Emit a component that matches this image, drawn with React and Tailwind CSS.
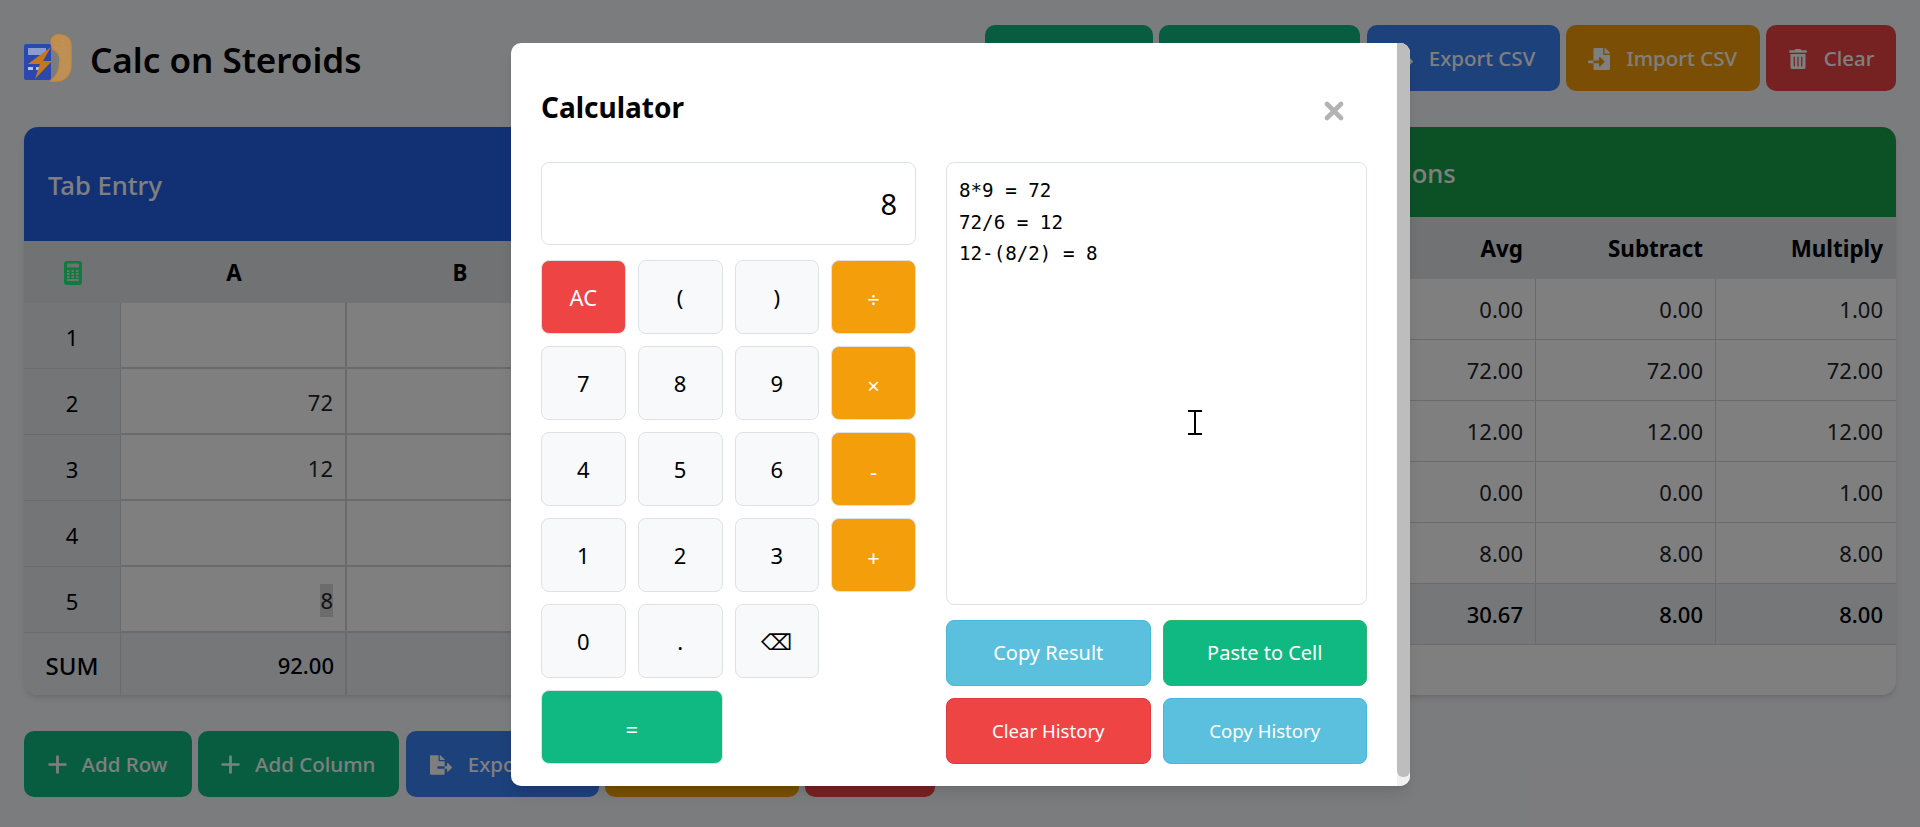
import { Plus, X } from 'lucide-react';
import { FaFileExport, FaFileImport, FaTrashAlt } from 'react-icons/fa';

const font = "font-['Noto_Sans','Open_Sans',sans-serif]";

const keys = [
  ['AC', 'danger'], ['(', 'num'], [')', 'num'], ['÷', 'op'],
  ['7', 'num'], ['8', 'num'], ['9', 'num'], ['×', 'op'],
  ['4', 'num'], ['5', 'num'], ['6', 'num'], ['-', 'op'],
  ['1', 'num'], ['2', 'num'], ['3', 'num'], ['+', 'op'],
  ['0', 'num'], ['.', 'num'], ['⌫', 'num'],
];

const keyStyles = {
  num: 'bg-[#f8f9fa] text-black text-[22px]',
  danger: 'bg-[#ef4444] text-white text-[22px]',
  op: 'bg-[#f59e0b] text-white text-[22px] pt-[5px]',
};

const leftRows = [
  ['1', ''],
  ['2', '72'],
  ['3', '12'],
  ['4', ''],
  ['5', '8'],
];

const rightRows = [
  ['0.00', '0.00', '1.00'],
  ['72.00', '72.00', '72.00'],
  ['12.00', '12.00', '12.00'],
  ['0.00', '0.00', '1.00'],
  ['8.00', '8.00', '8.00'],
];

function ActionButtons() {
  return (
    <div className="flex gap-[6.25px]">
      <button className="h-[66px] w-[168px] pt-[1px] rounded-[10px] bg-[#10b981] text-white text-[20.5px] font-medium flex items-center justify-center gap-[11px]"><Plus size={27} strokeWidth={2.4} className="-ml-[5px]" />Add Row</button>
      <button className="h-[66px] w-[201px] pt-[1px] rounded-[10px] bg-[#10b981] text-white text-[20.5px] font-medium flex items-center justify-center gap-[11px]"><Plus size={27} strokeWidth={2.4} className="-ml-[5px]" />Add Column</button>
      <button className="h-[66px] w-[193px] pt-[1px] rounded-[10px] bg-[#3b82f6] text-white text-[20.5px] font-medium flex items-center justify-center gap-4"><FaFileExport size={22} />Export CSV</button>
      <button className="h-[66px] w-[194px] pt-[1px] rounded-[10px] bg-[#f59e0b] text-white text-[20.5px] font-medium flex items-center justify-center gap-4"><FaFileImport size={22} />Import CSV</button>
      <button className="h-[66px] w-[130px] pt-[1px] rounded-[10px] bg-[#ef4444] text-white text-[20.5px] font-medium flex items-center justify-center gap-4"><FaTrashAlt size={20} />Clear</button>
    </div>
  );
}

// the logo is not dimmed by the overlay in the reference
function Logo() {
  return (
    <svg width="48" height="48" viewBox="0 0 48 48" className="shrink-0 relative z-10">
      <rect x="0" y="10" width="27" height="36" rx="2" fill="#2b48ad" />
      <rect x="4" y="14" width="18" height="7" fill="#8c9bd0" />
      <rect x="4" y="33" width="5" height="3" fill="#b7c2e6" />
      <rect x="12" y="33" width="5" height="3" fill="#b7c2e6" />
      <path d="M27 8C27 3 32 0 36 1C42 1 47 5 47 12L47 30C47 40 42 46 34 47L27 47C33 42 36 36 36 26C36 20 33 17 29 15Z" fill="#bd9058" stroke="#c98a36" strokeWidth="1.4" />
      <path d="M30 7C33 6 36 7 37 10M29 11C32 10 35 11 36 13M42 8C44 14 44 22 42 28" fill="none" stroke="#c98a36" strokeWidth="1" />
      <path d="M27 13L4 30H16L11 45L28 27H19Z" fill="#c8761e" />
    </svg>
  );
}

function CalcIcon() {
  const dots = [9, 12, 15];
  return (
    <svg width="18" height="24" viewBox="0 0 18 24" className="relative z-10">
      <rect width="18" height="24" rx="3" fill="#127a3e" />
      <rect x="3" y="2.5" width="12" height="4" fill="#6f7271" />
      {dots.map((y) => [3, 7.5, 12].map((x) => (
        <rect key={`${x}-${y}`} x={x} y={y} width="2.5" height="2" fill="#6f7271" />
      )))}
      <rect x="3" y="18" width="12" height="2" fill="#6f7271" />
    </svg>
  );
}

export default function App() {
  return (
    <div className={`relative h-[827px] overflow-hidden bg-[#f7f8fb] text-[#212529] ${font}`}>
      <div className="flex flex-col gap-[36px] px-6 pt-[25px]">
        <div className="flex justify-between items-center h-[66px]">
          <div className="flex items-center gap-[18px]">
            <Logo />
            <h1 className="text-[35px] font-semibold text-black mt-[4px]">Calc on Steroids</h1>
          </div>
          <ActionButtons />
        </div>

        <div className="flex gap-6 items-start">
          <div className="w-[952px] bg-white rounded-[14px] shadow-md overflow-hidden">
            <div className="h-[114px] pt-[5px] bg-[#2563eb] text-white text-[25.6px] font-medium flex items-center px-6">Tab Entry</div>
            <div className="grid grid-cols-[97px_226px_226px_1fr] h-[62px] pt-[2px] bg-[#e2e4e8] text-black font-bold text-[22.4px] items-center text-center">
              <div className="flex justify-center"><CalcIcon /></div>
              <div>A</div>
              <div>B</div>
              <div>C</div>
            </div>
            {leftRows.map(([n, v]) => (
              <div key={n} className="grid grid-cols-[97px_226px_226px_1fr] h-[66px] text-[22px]">
                <div className="bg-[#e8eaed] pt-[3px] border-b border-r border-[#d4d6d9] flex items-center justify-center text-black">{n}</div>
                <div className="pt-[3px] border-[2px] border-l-0 border-t-0 border-[#d4d6d9] flex items-center justify-end pr-[12px]">
                  {n === '5' ? <span className="bg-[#d8d8d8]">{v}</span> : v}
                </div>
                <div className="border-[2px] border-l-0 border-t-0 border-[#d4d6d9]"></div>
                <div className="border-b-[2px] border-[#d4d6d9]"></div>
              </div>
            ))}
            <div className="grid grid-cols-[97px_226px_226px_1fr] h-[62px] text-[22px] font-medium bg-[#eceef1] text-black">
              <div className="pt-[3px] text-[24px] border-r border-[#d4d6d9] flex items-center justify-center">SUM</div>
              <div className="pt-[3px] border-r-[2px] border-[#d4d6d9] flex items-center justify-end pr-[11px]">92.00</div>
              <div className="border-r border-[#d4d6d9]"></div>
              <div></div>
            </div>
          </div>

          <div className="flex-1 h-[568px] bg-white rounded-[14px] shadow-md overflow-hidden">
            <div className="h-[90px] pt-[4px] bg-[#16a34a] text-white text-[25.6px] font-medium flex items-center pl-[307px]">Calculations</div>
            <div className="grid grid-cols-[1fr_180px_180px_181px] h-[62px] pt-[2px] bg-[#e2e4e8] text-black font-bold text-[22.4px] items-center text-right">
              <div></div>
              <div className="pr-3">Avg</div>
              <div className="pr-3">Subtract</div>
              <div className="pr-[13px]">Multiply</div>
            </div>
            {rightRows.map((r, i) => (
              <div key={i} className="grid grid-cols-[1fr_180px_180px_181px] h-[61px] text-[22px] text-right">
                <div className="border-b border-[#d4d6d9]"></div>
                {r.map((v, j) => (
                  <div key={j} className={`border-b border-l border-[#d4d6d9] flex items-center justify-end ${j === 2 ? 'pr-[13px]' : 'pr-3'}`}>{v}</div>
                ))}
              </div>
            ))}
            <div className="grid grid-cols-[1fr_180px_180px_181px] h-[61px] text-[22px] font-medium bg-[#eceef1] text-black text-right">
              <div className="border-b border-[#d4d6d9]"></div>
              {['30.67', '8.00', '8.00'].map((v, j) => (
                <div key={j} className={`border-b border-l border-[#d4d6d9] flex items-center justify-end ${j === 2 ? 'pr-[13px]' : 'pr-3'}`}>{v}</div>
              ))}
            </div>
          </div>
        </div>

        <ActionButtons />
      </div>

      {/* modal */}
      <div className="absolute inset-0 bg-black/50">
        <div className="absolute left-[511px] top-[43px] w-[899px] h-[743px] bg-white text-black rounded-[10px] shadow-lg overflow-hidden flex">
          <div className="flex-1 pl-[30px] pr-[30px] pt-[34px]">
            <div className="flex justify-between items-center h-[60px] mb-[25px]">
              <h2 className="text-[28px] font-bold">Calculator</h2>
              <X size={28} strokeWidth={4} className="text-[#b3b3b3] mr-[19px] mt-[8px]" />
            </div>
            <div className="flex gap-[30px]">
              <div className="w-[375px]">
                <div className="h-[83px] border-[1.5px] border-[#dee2e6] rounded-lg flex items-center justify-end pr-[18px] text-[29px] mb-[15px]">8</div>
                <div className="grid grid-cols-4 gap-x-3 gap-y-3">
                  {keys.map(([k, kind]) => (
                    <button key={k} className={`h-[74px] rounded-lg border-[1.5px] border-[#dee2e6] flex items-center justify-center ${keyStyles[kind]}`}>{k}</button>
                  ))}
                  <div></div>
                  <button className="col-span-2 h-[74px] pt-[5px] rounded-lg bg-[#10b981] border-[1.5px] border-[#dee2e6] text-white text-[22px] flex items-center justify-center">=</button>
                </div>
              </div>
              <div className="w-[421px]">
                <div className="h-[443px] border-[1.5px] border-[#dee2e6] rounded-lg px-[12px] pt-[12px] font-['DejaVu_Sans_Mono',monospace] text-[19.2px] leading-[31.5px]">
                  <div>8*9 = 72</div>
                  <div>72/6 = 12</div>
                  <div>12-(8/2) = 8</div>
                </div>
                <div className="grid grid-cols-2 gap-3 mt-[15px] text-white">
                  <button className="h-[66px] rounded-lg border-[1.5px] border-[#46b8da] bg-[#5bc0de] text-[20px]">Copy Result</button>
                  <button className="h-[66px] rounded-lg border-[1.5px] border-[#34b36b] bg-[#10b981] text-[20px]">Paste to Cell</button>
                  <button className="h-[66px] rounded-lg border-[1.5px] border-[#dc3b3f] bg-[#ef4444] text-[18.6px]">Clear History</button>
                  <button className="h-[66px] rounded-lg border-[1.5px] border-[#46b8da] bg-[#5bc0de] text-[18.6px]">Copy History</button>
                </div>
              </div>
            </div>
          </div>
          <div className="w-[13px] bg-[#f1f1f1]">
            <div className="h-[734px] bg-[#bdbdbd] rounded-b-[6px]"></div>
          </div>
        </div>
        {/* mouse pointer */}
        <svg width="14" height="25" viewBox="0 0 14 25" className="absolute left-[1188px] top-[410px]">
          <path d="M0 0h14v2H8v21h6v2H0v-2h6V2H0z" fill="#000" />
        </svg>
      </div>
    </div>
  );
}
